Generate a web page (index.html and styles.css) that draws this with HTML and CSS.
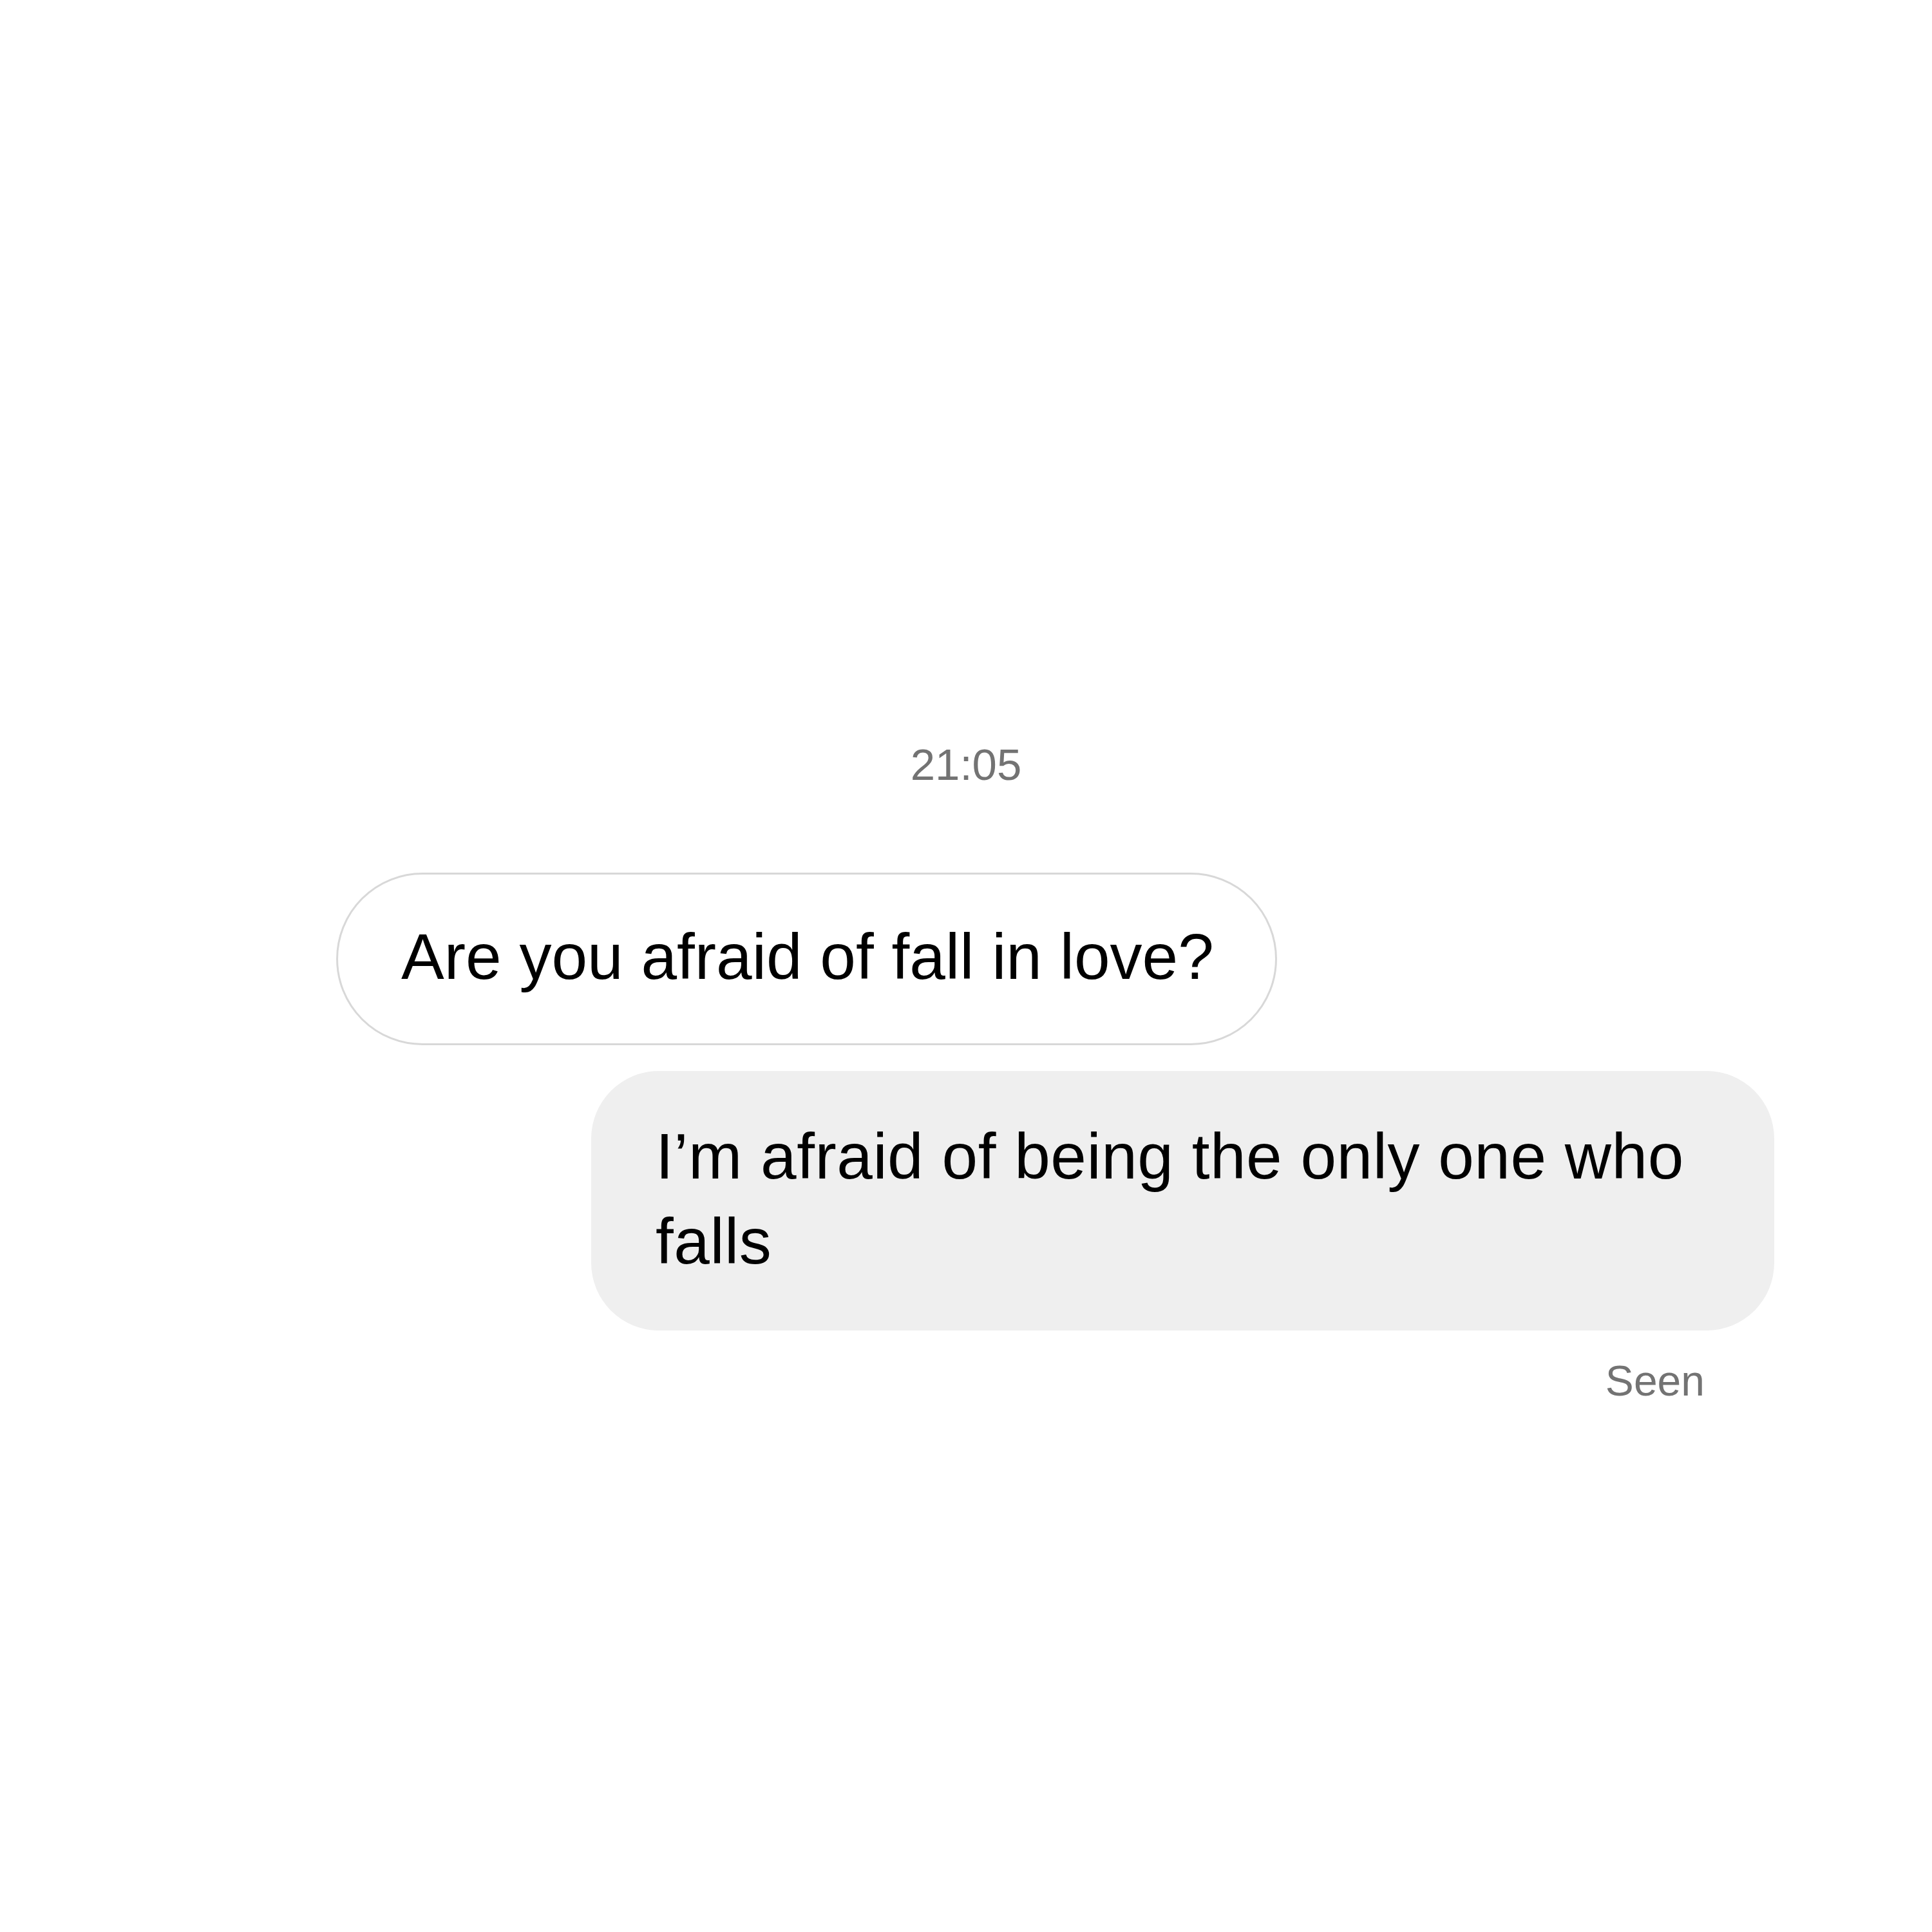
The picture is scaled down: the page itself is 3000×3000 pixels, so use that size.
FILE: index.html
```html
<!DOCTYPE html>
<html lang="en">
<head>
    <meta charset="UTF-8">
    <meta name="viewport" content="width=device-width, initial-scale=1.0">
    <title>Messages</title>
    <link rel="stylesheet" href="styles.css">
</head>
<body>
    <!-- Conversation -->
    <div class="chat">
        <div class="time">21:05</div>

        <div class="row row-in">
            <div class="bubble bubble-in">Are you afraid of fall in love?</div>
        </div>

        <div class="row row-out">
            <div class="bubble bubble-out">I’m afraid of being the only one who falls</div>
        </div>

        <div class="seen">Seen</div>
    </div>
</body>
</html>
```

FILE: styles.css
```css
/* Body style */
body {
    margin: 0;
    padding: 0;
    background-color: #fff;
    font-family: "Liberation Sans", Arial, sans-serif;
    color: #000;
}

/* Chat column */
.chat {
    width: 3000px;
    padding-top: 1148px;
    display: flex;
    flex-direction: column;
}

/* Timestamp */
.time {
    text-align: center;
    font-size: 69px;
    line-height: 80px;
    color: #737373;
}

/* Message rows */
.row {
    display: flex;
}

.row-in {
    justify-content: flex-start;
    padding-left: 522px;
    margin-top: 127px;
}

.row-out {
    justify-content: flex-end;
    padding-right: 245px;
    margin-top: 40px;
}

/* Bubbles */
.bubble {
    font-size: 100px;
    box-sizing: border-box;
}

.bubble-in {
    border: 3px solid #d8d8d8;
    border-radius: 134px;
    padding: 67px 95px 75px 98px;
    line-height: 120px;
    background-color: #fff;
}

.bubble-out {
    width: 1837px;
    background-color: #efefef;
    border-radius: 105px;
    padding: 66px 107px 73px 100px;
    line-height: 132px;
    letter-spacing: 0.5px;
}

/* Read receipt */
.seen {
    text-align: right;
    padding-right: 353px;
    margin-top: 38px;
    font-size: 66px;
    line-height: 80px;
    color: #737373;
}
```
